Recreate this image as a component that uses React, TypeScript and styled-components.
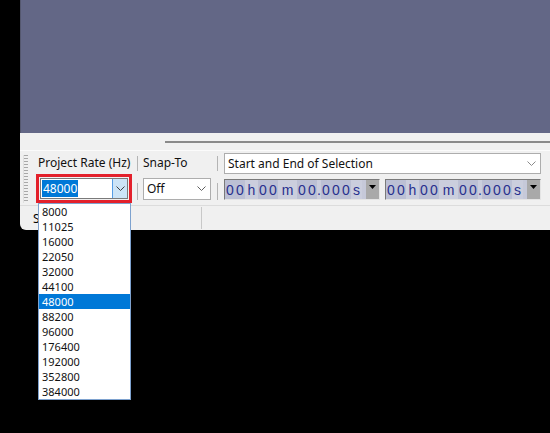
import styled, { createGlobalStyle } from 'styled-components'

const GlobalStyle = createGlobalStyle`
  html, body {
    margin: 0;
    padding: 0;
    background: #000;
  }
  body {
    font-family: "Noto Sans", "Open Sans", sans-serif;
    font-size: 11px;
    color: #000;
  }
`

const rates = [
  '8000',
  '11025',
  '16000',
  '22050',
  '32000',
  '44100',
  '48000',
  '88200',
  '96000',
  '176400',
  '192000',
  '352800',
  '384000',
]

type TimeCell = { text: string; w: number; kind: 'digit' | 'label' }

const timeCells: TimeCell[] = [
  { text: '0', w: 10, kind: 'digit' },
  { text: '0', w: 10, kind: 'digit' },
  { text: 'h', w: 13, kind: 'label' },
  { text: '0', w: 10, kind: 'digit' },
  { text: '0', w: 10, kind: 'digit' },
  { text: 'm', w: 19, kind: 'label' },
  { text: '0', w: 10, kind: 'digit' },
  { text: '0', w: 10, kind: 'digit' },
  { text: '.', w: 4, kind: 'label' },
  { text: '0', w: 10, kind: 'digit' },
  { text: '0', w: 10, kind: 'digit' },
  { text: '0', w: 10, kind: 'digit' },
  { text: 's', w: 11, kind: 'label' },
]

const Chevron = ({ color = '#606060' }: { color?: string }) => (
  <svg width="9" height="5" viewBox="0 0 9 5">
    <path d="M0.5 0.5 L4.5 4.5 L8.5 0.5" fill="none" stroke={color} strokeWidth="1" />
  </svg>
)

const TimeControl = () => (
  <TimeBox>
    {timeCells.map((c, i) => (
      <Cell key={i} $w={c.w} $kind={c.kind}>
        {c.text}
      </Cell>
    ))}
    <TimeArrow>
      <svg width="7" height="4" viewBox="0 0 7 4">
        <path d="M0 0 H7 L3.5 4 Z" fill="#000" />
      </svg>
    </TimeArrow>
  </TimeBox>
)

export default function App() {
  return (
    <>
      <GlobalStyle />
      <Page>
        <Window>
          <TrackArea />
          <ScrollRow>
            <ScrollLine />
          </ScrollRow>
          <Toolbar>
            <Grip />
            <ToolGrid>
              <Label $pad={2}>Project Rate (Hz)</Label>
              <Separator />
              <Label>Snap-To</Label>
              <Separator />
              <Combo $w={317} $h={21}>
                <ComboText>Start and End of Selection</ComboText>
                <ComboButton>
                  <Chevron color="#8a8a8a" />
                </ComboButton>
              </Combo>

              <Highlight>
                <Combo $w={88} $h={21} $open>
                  <Selected>48000</Selected>
                  <OpenButton>
                    <Chevron color="#404040" />
                  </OpenButton>
                </Combo>
              </Highlight>
              <Separator $low />
              <Combo $w={68} $h={22}>
                <ComboText>Off</ComboText>
                <ComboButton>
                  <Chevron />
                </ComboButton>
              </Combo>
              <Separator $low />
              <TimeRow>
                <TimeControl />
                <TimeControl />
              </TimeRow>
            </ToolGrid>
          </Toolbar>
          <StatusBar>
            <StatusText>S</StatusText>
            <StatusDivider />
          </StatusBar>
        </Window>
        <DropList>
          {rates.map((r) => (
            <DropItem key={r} $active={r === '48000'}>
              {r}
            </DropItem>
          ))}
        </DropList>
      </Page>
    </>
  )
}

const Page = styled.div`
  position: relative;
  width: 550px;
  height: 433px;
  background: #000;
  overflow: hidden;
`

const Window = styled.div`
  margin-left: 20px;
  width: 530px;
  height: 230px;
  background: #f0f0f0;
  border-bottom-left-radius: 6px;
  display: flex;
  flex-direction: column;
  overflow: hidden;
`

const TrackArea = styled.div`
  height: 133px;
  background: #636786;
  border-left: 1px solid #55586f;
`

const ScrollRow = styled.div`
  height: 17px;
  padding-top: 8px;
  box-sizing: border-box;
  padding-left: 145px;
`

const ScrollLine = styled.div`
  height: 2px;
  background: #8a8a8a;
`

const Toolbar = styled.div`
  height: 56px;
  display: flex;
  border-top: 1px solid #fbfbfb;
  border-bottom: 1px solid #dcdcdc;
  box-sizing: border-box;
`

const Grip = styled.div`
  width: 4px;
  margin: 4px 0 2px 3px;
  background: repeating-linear-gradient(
    to bottom,
    #a8a8a8 0,
    #a8a8a8 1px,
    transparent 1px,
    transparent 3px
  );
  border-left: 1px solid #e0e0e0;
`

const ToolGrid = styled.div`
  margin-left: 8px;
  display: grid;
  grid-template-columns: 96px 11px 68px 13px 317px;
  grid-template-rows: 22px 29px;
  align-items: center;
  padding-top: 1px;
`

const Label = styled.div<{ $pad?: number }>`
  padding-left: ${(p) => p.$pad ?? 0}px;
  font-size: 12px;
  line-height: 16px;
  color: #111;
  white-space: nowrap;
`

const Separator = styled.div<{ $low?: boolean }>`
  justify-self: center;
  width: 1px;
  height: ${(p) => (p.$low ? 17 : 15)}px;
  margin-top: ${(p) => (p.$low ? 6 : 0)}px;
  background: #b4b4b4;
`

const Combo = styled.div<{ $w: number; $h: number; $open?: boolean }>`
  width: ${(p) => p.$w}px;
  height: ${(p) => p.$h}px;
  box-sizing: border-box;
  background: #fff;
  border: 1px solid ${(p) => (p.$open ? '#7a7a7a' : '#adadad')};
  display: flex;
  align-items: center;
`

const ComboText = styled.span`
  flex: 1;
  padding-left: 3px;
  font-size: 12px;
  color: #111;
  white-space: nowrap;
`

const ComboButton = styled.div`
  width: 17px;
  height: 100%;
  display: flex;
  align-items: center;
  justify-content: center;
`

const OpenButton = styled.div`
  margin-left: auto;
  width: 15px;
  height: 100%;
  box-sizing: border-box;
  background: #cce4f7;
  border-left: 1px solid #569de5;
  display: flex;
  align-items: center;
  justify-content: center;
`

const Selected = styled.span`
  margin-left: 1px;
  padding: 0 1px;
  background: #0078d7;
  color: #fff;
  font-size: 12px;
  line-height: 17px;
`

const Highlight = styled.div`
  width: 96px;
  height: 29px;
  box-sizing: border-box;
  border: 3px solid #e3202b;
  padding: 1px;
  display: flex;
  align-items: center;
  justify-content: center;
`

const TimeRow = styled.div`
  display: flex;
  gap: 5px;
  margin-top: 2px;
`

const TimeBox = styled.div`
  width: 156px;
  height: 21px;
  box-sizing: border-box;
  display: flex;
  background: #c6c9d9;
  border-top: 1px solid #7a7a7a;
  border-left: 1px solid #7a7a7a;
  border-bottom: 1px solid #e4e4e4;
  border-right: 1px solid #e4e4e4;
`

const Cell = styled.div<{ $w: number; $kind: 'digit' | 'label' }>`
  width: ${(p) => p.$w}px;
  display: flex;
  align-items: center;
  justify-content: center;
  background: ${(p) => (p.$kind === 'digit' ? '#bcc0d4' : '#cbcedd')};
  color: #28308e;
  font-family: "Liberation Sans", Arial, sans-serif;
  font-size: 14px;
`

const TimeArrow = styled.div`
  width: 13px;
  margin-left: auto;
  background: #a9a9a9;
  display: flex;
  align-items: flex-start;
  justify-content: center;
  padding-top: 5px;
  box-sizing: border-box;
`

const StatusBar = styled.div`
  flex: 1;
  display: flex;
  align-items: center;
  position: relative;
`

const StatusText = styled.span`
  padding-left: 13px;
  font-size: 12px;
  width: 168px;
`

const StatusDivider = styled.div`
  width: 1px;
  align-self: stretch;
  margin: 1px 0;
  background: #c8c8c8;
`

const DropList = styled.div`
  position: absolute;
  left: 38px;
  top: 203px;
  width: 93px;
  box-sizing: border-box;
  background: #fff;
  border: 1px solid #7ea2cf;
`

const DropItem = styled.div<{ $active?: boolean }>`
  height: 15px;
  line-height: 15px;
  padding-left: 3px;
  font-size: 11px;
  color: ${(p) => (p.$active ? '#fff' : '#111')};
  background: ${(p) => (p.$active ? '#0078d7' : 'transparent')};
`
